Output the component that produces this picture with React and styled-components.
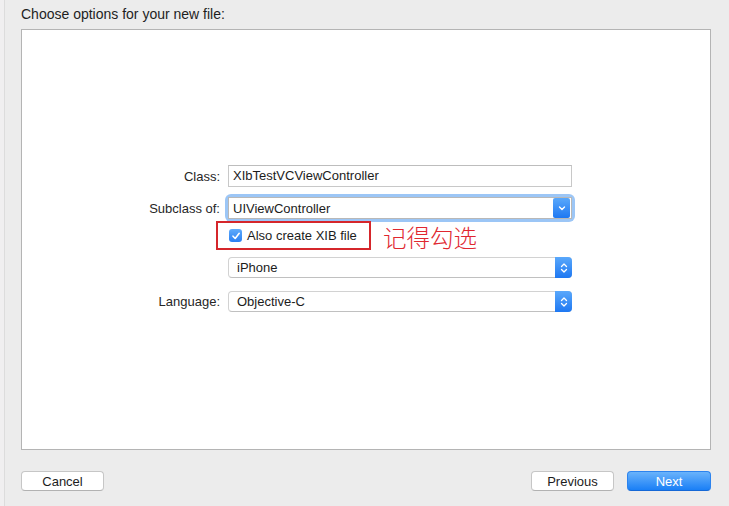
import styled, { createGlobalStyle } from "styled-components";

const Global = createGlobalStyle`
  html, body {
    margin: 0;
    padding: 0;
    background: #ececec;
  }
  body {
    font-family: "Liberation Sans", Arial, sans-serif;
    font-size: 13px;
    color: #222;
  }
`;

function Chevrons({ single }) {
  return (
    <svg width="8" height="12" viewBox="0 0 8 12">
      {single ? (
        <path d="M1.5 5 L4 7.5 L6.5 5" fill="none" stroke="#fff" strokeWidth="1.4" strokeLinecap="round" strokeLinejoin="round" />
      ) : (
        <>
          <path d="M1.5 4.5 L4 2 L6.5 4.5" fill="none" stroke="#fff" strokeWidth="1.3" strokeLinecap="round" strokeLinejoin="round" />
          <path d="M1.5 7.5 L4 10 L6.5 7.5" fill="none" stroke="#fff" strokeWidth="1.3" strokeLinecap="round" strokeLinejoin="round" />
        </>
      )}
    </svg>
  );
}

function Check() {
  return (
    <svg width="10" height="10" viewBox="0 0 10 10">
      <path d="M2 5.2 L4.2 7.5 L8.2 2.3" fill="none" stroke="#fff" strokeWidth="1.6" strokeLinecap="round" strokeLinejoin="round" />
    </svg>
  );
}

export default function App() {
  return (
    <>
      <Global />
      <Window>
        <Edge />
        <Main>
          <Title>Choose options for your new file:</Title>
          <Panel>
            <Form>
              <Row>
                <Label>Class:</Label>
                <TextField>XIbTestVCViewController</TextField>
              </Row>
              <Row gap={10}>
                <Label>Subclass of:</Label>
                <Focus>
                  <Combo>
                    <span>UIViewController</span>
                    <Stepper combo>
                      <Chevrons single />
                    </Stepper>
                  </Combo>
                </Focus>
              </Row>
              <Row gap={2}>
                <Label />
                <CheckLine>
                  <Mark>
                    <Box>
                      <Check />
                    </Box>
                    Also create XIB file
                  </Mark>
                  <Note>记得勾选</Note>
                </CheckLine>
              </Row>
              <Row gap={7}>
                <Label />
                <Popup>
                  <span>iPhone</span>
                  <Stepper>
                    <Chevrons />
                  </Stepper>
                </Popup>
              </Row>
              <Row gap={13}>
                <Label>Language:</Label>
                <Popup>
                  <span>Objective-C</span>
                  <Stepper>
                    <Chevrons />
                  </Stepper>
                </Popup>
              </Row>
            </Form>
          </Panel>
          <Footer>
            <Button>Cancel</Button>
            <Spacer />
            <Button>Previous</Button>
            <Button primary>Next</Button>
          </Footer>
        </Main>
      </Window>
    </>
  );
}

const Window = styled.div`
  display: flex;
  width: 729px;
  height: 506px;
  overflow: hidden;
`;

const Edge = styled.div`
  width: 4px;
  flex-shrink: 0;
  background: #f0eff0;
  border-right: 1px solid #dcdcdc;
`;

const Main = styled.div`
  flex: 1;
  display: flex;
  flex-direction: column;
  padding: 0 18px 0 16px;
`;

const Title = styled.div`
  height: 29px;
  line-height: 28px;
  font-size: 14px;
  color: #1e1e1e;
`;

const Panel = styled.div`
  background: #fff;
  border: 1px solid #b4b4b4;
  display: flex;
  flex-direction: column;
  padding-top: 135px;
  box-sizing: border-box;
  height: 421px;
`;

const Form = styled.div`
  display: flex;
  flex-direction: column;
`;

const Row = styled.div`
  display: flex;
  align-items: center;
  margin-top: ${(p) => p.gap || 0}px;
`;

const Label = styled.div`
  width: 198px;
  margin-right: 8px;
  text-align: right;
  color: #262626;
`;

const TextField = styled.div`
  width: 344px;
  height: 22px;
  box-sizing: border-box;
  border: 1px solid #c8c8c8;
  border-top-color: #bdbdbd;
  padding: 0 4px;
  line-height: 20px;
  color: #1c1c1c;
`;

const Focus = styled.div`
  width: 344px;
  height: 22px;
  border-radius: 3px;
  box-shadow: 0 0 0 3px #9cc6f6;
`;

const Combo = styled.div`
  height: 22px;
  display: flex;
  align-items: center;
  justify-content: space-between;
  box-sizing: border-box;
  border: 1px solid #b8b8b8;
  background: #fff;
  padding-left: 4px;
  color: #1c1c1c;
`;

const Popup = styled.div`
  width: 344px;
  height: 21px;
  display: flex;
  align-items: center;
  justify-content: space-between;
  box-sizing: border-box;
  border: 1px solid #d2d2d2;
  border-bottom-color: #c0c0c0;
  border-radius: 4px;
  background: #fff;
  padding-left: 8px;
  color: #1c1c1c;
`;

const Stepper = styled.div`
  width: 17px;
  height: ${(p) => (p.combo ? 20 : 21)}px;
  margin-right: ${(p) => (p.combo ? 1 : -1)}px;
  display: flex;
  align-items: center;
  justify-content: center;
  border-radius: ${(p) => (p.combo ? "2px" : "0 4px 4px 0")};
  background: linear-gradient(#5aa8fb, #1e78f2);
`;

const CheckLine = styled.div`
  display: flex;
  align-items: center;
  margin-left: -12px;
`;

const Mark = styled.div`
  width: 155px;
  height: 29px;
  box-sizing: border-box;
  border: 2px solid #d5262b;
  display: flex;
  align-items: center;
  padding-left: 11px;
  font-size: 13px;
  color: #1c1c1c;
`;

const Box = styled.div`
  width: 13px;
  height: 13px;
  border-radius: 3px;
  background: linear-gradient(#5fabfb, #2a80f3);
  display: flex;
  align-items: center;
  justify-content: center;
  margin-right: 5px;
`;

const Note = styled.div`
  margin-left: 12px;
  height: 29px;
  box-sizing: border-box;
  padding-top: 3px;
  font-family: "Noto Sans CJK SC", sans-serif;
  font-size: 23.5px;
  line-height: 26px;
  color: #e0272f;
  font-weight: 300;
`;

const Footer = styled.div`
  display: flex;
  gap: 13px;
  margin-top: 21px;
`;

const Spacer = styled.div`
  flex: 1;
`;

const Button = styled.div`
  width: ${(p) => (p.primary ? 84 : 83)}px;
  height: 20px;
  box-sizing: border-box;
  border-radius: 4px;
  text-align: center;
  line-height: 19px;
  font-size: 13px;
  color: ${(p) => (p.primary ? "#fff" : "#1c1c1c")};
  background: ${(p) => (p.primary ? "linear-gradient(#6ab3fb, #1a7ff6)" : "#fff")};
  border: 1px solid ${(p) => (p.primary ? "#2c83ee" : "#c6c6c6")};
  border-bottom-color: ${(p) => (p.primary ? "#1568d6" : "#b2b2b2")};
`;
